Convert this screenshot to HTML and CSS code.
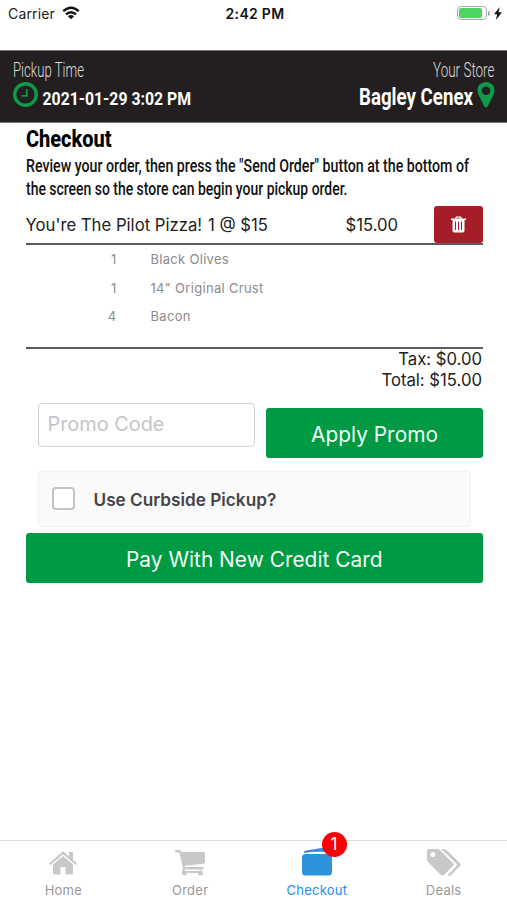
FILE: index.html
```html
<!DOCTYPE html>
<html lang="en">
<head>
<meta charset="utf-8">
<title>Checkout</title>
<link rel="stylesheet" href="styles.css">
</head>
<body>
<div class="status">
  <div class="carrier"><span>Carrier</span>
    <svg width="18" height="14" viewBox="0 0 18 14" fill="none" stroke="#111" stroke-width="2.3"><path d="M1.2 5.2Q9-1.8 16.8 5.2M4 8.4Q9 4 14 8.4"/><path d="M9 13.2L5.9 10.2Q9 7.8 12.1 10.2Z" fill="#111" stroke="none"/></svg>
  </div>
  <div class="time">2:42 PM</div>
  <div class="power"><span class="battery"><i></i></span><span class="nub"></span>
    <svg width="8" height="13" viewBox="0 0 8 13"><path d="M5.8 0L0 7.3H3.2L1.9 13L8 5.2H4.5Z" fill="#111"/></svg>
  </div>
</div>
<header class="header">
  <div class="head-col">
    <svg class="cond" width="90" height="24"><text class="light" x="0" y="19" textLength="71" lengthAdjust="spacingAndGlyphs">Pickup Time</text></svg>
    <div class="head-row">
      <svg width="26" height="26" viewBox="0 0 26 26" fill="none" stroke="#0b9b49"><circle cx="12.5" cy="12.5" r="10.8" stroke-width="3.4"/><path d="M13.8 7V13.8H8.5" stroke-width="1.8"/></svg>
      <svg class="cond" width="156" height="26"><text class="date" x="3.5" y="23.3" textLength="148.5" lengthAdjust="spacingAndGlyphs">2021-01-29 3:02 PM</text></svg>
    </div>
  </div>
  <div class="head-col right">
    <svg class="cond" width="66" height="24"><text class="light" x="4" y="19" textLength="61.5" lengthAdjust="spacingAndGlyphs">Your Store</text></svg>
    <div class="head-row">
      <svg class="cond" width="118" height="28"><text class="store" x="0" y="22.5" textLength="114" lengthAdjust="spacingAndGlyphs">Bagley Cenex</text></svg>
      <svg width="18" height="26" viewBox="0 0 18 26"><path fill="#0b9b49" fill-rule="evenodd" d="M9 0C4 0 .5 3.6.5 8.2C.5 10.5 1.2 12 2 13.7L7.2 24.2Q9 26.8 10.8 24.2L16 13.7C16.8 12 17.5 10.5 17.5 8.2C17.5 3.6 14 0 9 0ZM9 4.4A4.3 4.3 0 1 1 9 13A4.3 4.3 0 1 1 9 4.4Z"/></svg>
    </div>
  </div>
</header>
<main class="main">
  <svg class="cond dark" width="457" height="81">
    <text class="title" x="0" y="24" textLength="85.5" lengthAdjust="spacingAndGlyphs">Checkout</text>
    <text class="copy" x="0" y="49" textLength="443" lengthAdjust="spacingAndGlyphs">Review your order, then press the "Send Order" button at the bottom of</text>
    <text class="copy" x="0" y="72.3" textLength="321.5" lengthAdjust="spacingAndGlyphs">the screen so the store can begin your pickup order.</text>
  </svg>
  <div class="item">
    <span class="name">You're The Pilot Pizza!</span><span class="qty">1 @ $15</span><span class="price">$15.00</span>
    <button class="trash" aria-label="Remove"><svg width="15" height="17" viewBox="0 0 15 17"><path fill="#fff" fill-rule="evenodd" d="M4 2.5L5 .5H10L11 2.5H15V4H13.5V14.8Q13.5 16.5 11.8 16.5H3.2Q1.5 16.5 1.5 14.8V4H0V2.5ZM5.3 2.5H9.7L9.3 1.7H5.7ZM4 5.5V14H5V5.5ZM7 5.5V14H8V5.5ZM10 5.5V14H11V5.5Z"/></svg></button>
  </div>
  <div class="options">
    <span>1</span><span>Black Olives</span>
    <span>1</span><span>14" Original Crust</span>
    <span>4</span><span>Bacon</span>
  </div>
  <div class="totals"><div class="tax">Tax: $0.00</div><div class="total">Total: $15.00</div></div>
  <div class="promo"><input class="code" placeholder="Promo Code"><button class="green apply"><span>Apply Promo</span></button></div>
  <label class="curb"><span class="box"></span><span class="curb-text">Use Curbside Pickup?</span></label>
  <button class="green pay"><span>Pay With New Credit Card</span></button>
</main>
<nav class="tabs">
  <div class="tab"><svg width="28" height="24" viewBox="0 0 28 24" fill="#c8c8c8"><path d="M14 .3L0 12.4L1.4 14L14 3.3L26.6 14L28 12.4L24 8.9V1H20V5.5Z"/><path d="M14 5L4 13.5V22Q4 23.5 5.5 23.5H11.5V16H16.5V23.5H22.5Q24 23.5 24 22V13.5Z"/></svg><span>Home</span></div>
  <div class="tab"><svg width="30" height="26" viewBox="0 0 30 26" fill="#c8c8c8"><path d="M1 0H5Q6 0 6.4 2H29Q30 2 30 3V12Q30 13.5 28.5 13.7L9.7 15.7L10 17H27.5Q28.7 17 28.7 18.2T27.5 19.4H9.5V21H26V23H8Q7 23 7.2 21.7L8 18L4.4 2.4H1Q0 2.4 0 1.2T1 0Z"/><circle cx="9.3" cy="23" r="2.5"/><circle cx="25.5" cy="23" r="2.5"/></svg><span>Order</span></div>
  <div class="tab active"><svg width="30" height="29" viewBox="0 0 30 29" fill="#2d93dc"><path d="M1.5 6Q2 3.8 4 3.4L24 .2Q26 0 26.5 2L27 5Q14 4.2 1.5 6Z"/><rect y="7" width="30" height="21.5" rx="3.5"/></svg><b class="badge">1</b><span>Checkout</span></div>
  <div class="tab"><svg width="34" height="27" viewBox="0 0 34 27" fill="#c8c8c8"><path fill-rule="evenodd" d="M2 0H10Q12 0 14 2L26 14Q27.3 15.5 26 17L17 26Q15.5 27.3 14 26L2 14Q0 12 0 10V2Q0 0 2 0ZM5.8 3A2.5 2.5 0 1 0 5.8 8A2.5 2.5 0 1 0 5.8 3Z"/><path d="M14 0H17Q18.5 0 20.3 1.8L33 14.2Q34.2 15.5 33 17L23.5 26.5Q22 27.6 20.5 26.3L29 17.5Q30.5 15.7 29 14.2Z"/></svg><span>Deals</span></div>
</nav>
</body>
</html>
```
FILE: styles.css
```css
* { box-sizing: border-box; }
body { margin: 0; height: 900px; display: flex; flex-direction: column; background: #fff; color: #212121; font-family: Inter, "Liberation Sans", sans-serif; overflow: hidden; }
svg { display: block; flex: none; }
button { border: 0; padding: 0; font-family: inherit; }
.status { height: 50px; padding: 5px 5px 0 8px; display: grid; grid-template-columns: 1fr auto 1fr; align-items: start; font-size: 14px; line-height: 18px; }
.carrier { display: flex; gap: 7px; letter-spacing: .15px; }
.carrier svg { margin-top: 1px; }
.time { font-weight: 600; color: #111; letter-spacing: .3px; }
.power { display: flex; justify-content: flex-end; align-items: center; height: 16px; }
.battery { width: 30px; height: 14px; border: 1px solid #aaa; border-radius: 4px; padding: 1px 4px 1px 1px; }
.battery i { display: block; height: 10px; background: #4cd763; border-radius: 2px; }
.nub { width: 2px; height: 5px; background: #aaa; border-radius: 0 2px 2px 0; margin: 0 4px 0 1px; }
.header { height: 73px; padding: 7px 12px 0 13px; background: #231f20; border-top: 1px solid #777; border-bottom: 1px solid #777; display: flex; justify-content: space-between; }
.head-col { display: flex; flex-direction: column; }
.right { align-items: flex-end; }
.head-row { display: flex; }
.cond { font-family: Roboto, sans-serif; fill: #fff; overflow: visible; }
.light { font-size: 19.5px; font-weight: 300; fill: #ddd; }
.date { font-size: 19px; font-weight: 700; }
.store { font-size: 23px; font-weight: 700; }
.dark { fill: #111; }
.title { font-size: 24px; font-weight: 800; fill: #000; }
.copy { font-size: 18.5px; font-weight: 500; }
.main { padding: 0 24px 0 25.5px; }
.item { height: 41px; display: flex; align-items: center; border-bottom: 2px solid #5c5c5c; font-size: 16.7px; }
.item span { padding-top: 3px; }
.name { width: 182.5px; white-space: nowrap; }
.qty { width: 137.5px; }
.trash { width: 49px; height: 37px; align-self: flex-end; margin-left: auto; background: #a51e27; border-radius: 3px; display: grid; place-items: center; }
.options { height: 104px; display: grid; grid-template-columns: 91px 1fr; column-gap: 34px; grid-auto-rows: 28.5px; align-content: start; align-items: center; border-bottom: 2px solid #5c5c5c; color: #8b8b8b; font-size: 13px; letter-spacing: .3px; }
.options span:nth-child(odd) { text-align: right; }
.totals { height: 54px; padding-right: 1px; text-align: right; font-size: 16.7px; line-height: 21px; }
.promo { display: flex; justify-content: space-between; align-items: flex-start; padding-left: 12px; height: 68px; }
.code { width: 217px; height: 44px; border: 1.5px solid #d2d2d5; border-radius: 4px; padding: 0 9px 3px; font: 19.9px Inter, sans-serif; background: #fff; }
.code::placeholder { color: #c5c5ca; }
.green { background: #009a45; color: #effff3; border-radius: 3px; height: 50px; font-size: 20.9px; }
.green span { position: relative; top: 1px; }
.apply { width: 217px; margin-top: 5px; }
.curb { display: flex; align-items: center; margin: 0 12px; height: 56px; border: 1px solid #f0f0f0; border-radius: 4px; background: #fafafa; padding-left: 13px; }
.box { width: 23px; height: 23px; border: 2px solid #c4c4c4; border-radius: 4px; margin: -2px 19px 0 0; background: #fff; }
.curb-text { font-size: 17.2px; font-weight: 600; color: #444447; }
.pay { width: 100%; margin-top: 6px; display: block; }
.tabs { margin-top: auto; height: 60px; border-top: 1px solid #dcdcdc; display: grid; grid-template-columns: repeat(4, 1fr); font-size: 13px; color: #999; }
.tab { position: relative; display: flex; flex-direction: column; align-items: center; justify-content: flex-end; padding-bottom: 2px; }
.tab > span { line-height: 16px; margin-top: 6px; letter-spacing: .25px; }
.tab svg { margin-bottom: 0; }
.tab:first-child svg { margin-bottom: 1px; }
.active { color: #258bf4; }
.badge { position: absolute; left: 68px; top: -9px; width: 25px; height: 25px; border-radius: 50%; background: #fb0007; color: #fff; font-size: 17px; font-weight: 400; line-height: 25px; text-align: center; }
```
